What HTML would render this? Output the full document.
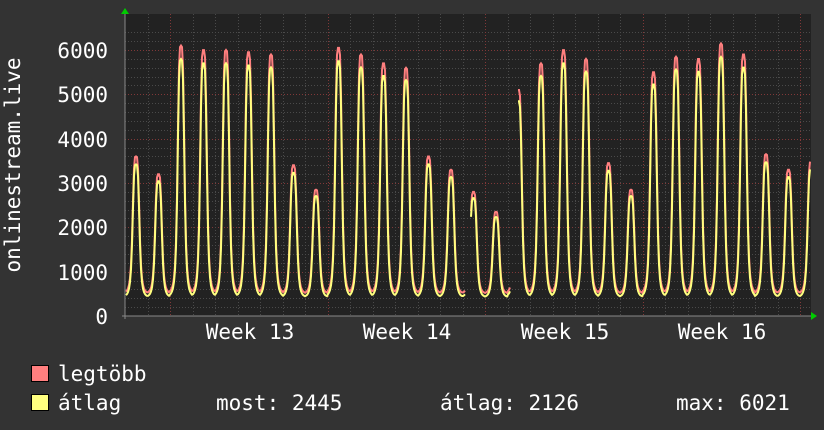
<!DOCTYPE html>
<html><head><meta charset="utf-8"><style>
html,body{margin:0;padding:0;background:#333;}
svg{display:block}
text{font-family:"DejaVu Sans Mono","Liberation Mono",monospace;font-size:21px;fill:#fff}
</style></head><body>
<svg id="g" width="824" height="430" xmlns="http://www.w3.org/2000/svg">
<rect x="0" y="0" width="824" height="430" fill="#333"/>
<rect x="125" y="14" width="686" height="302" fill="#222"/>
<g id="grid"></g>
<g id="data"></g>
<line x1="122" y1="316" x2="813" y2="316" stroke="#888" stroke-width="1"/>
<line x1="125" y1="10" x2="125" y2="319" stroke="#888" stroke-width="1"/>
<polygon points="121,14 129,14 125,8" fill="#0c0"/>
<polygon points="811,312 811,320 817,316" fill="#0c0"/>
<g text-anchor="end">
<text x="108" y="58">6000</text>
<text x="108" y="102">5000</text>
<text x="108" y="147">4000</text>
<text x="108" y="191">3000</text>
<text x="108" y="235">2000</text>
<text x="108" y="280">1000</text>
<text x="108" y="324">0</text>
</g>
<g text-anchor="middle">
<text x="250" y="339">Week 13</text>
<text x="407" y="339">Week 14</text>
<text x="565" y="339">Week 15</text>
<text x="722" y="339">Week 16</text>
</g>
<text transform="translate(20,165) rotate(-90)" text-anchor="middle">onlinestream.live</text>
<rect x="31.5" y="365.5" width="17" height="16" fill="#ff7f7f" stroke="#000"/>
<rect x="31.5" y="394.5" width="17" height="16" fill="#ffff7f" stroke="#000"/>
<text x="58" y="381">legtöbb</text>
<text x="58" y="410">átlag</text>
<text x="216" y="410">most: 2445</text>
<text x="440" y="410">átlag: 2126</text>
<text x="676" y="410">max: 6021</text>
</svg>
<script>
var ns="http://www.w3.org/2000/svg";
var grid=document.getElementById('grid'),data=document.getElementById('data');
function ln(x1,y1,x2,y2,c,d){var l=document.createElementNS(ns,'line');l.setAttribute('x1',x1);l.setAttribute('y1',y1);l.setAttribute('x2',x2);l.setAttribute('y2',y2);l.setAttribute('stroke',c);l.setAttribute('stroke-width',1);l.setAttribute('stroke-dasharray',d);grid.appendChild(l);}
function Y(v){return 316-v*0.04433;}
for(var v=200;v<=6400;v+=200){var y=Math.round(Y(v))+0.5;if(y<14)break;ln(125,y,811,y,v%1000==0?'#803838':'#4a4a4a','1,2');}
for(var i=1;i<31;i++){var x=Math.round(125+i*22.5)+0.5;ln(x,14,x,316,(i-2)%7==0?'#803838':'#4a4a4a','1,2');}
var peaks=[3600,3200,6100,6000,6000,5950,5900,3400,2850,6050,5900,5700,5600,3600,3300,2800,2350,5100,5700,6000,5800,3450,2850,5500,5850,5800,6150,5900,3650,3300,3500];
function val(x,f){var t=(x-136)/22.5;var d=Math.round(t);var a=Math.abs(t-d);if(d<0)d=0;if(d>=peaks.length)d=peaks.length-1;
var p=peaks[d]*f;var base=f>0.97?500:420;
var s=1/(1+Math.pow(a/0.16,4));
var b=base+60*Math.pow(Math.cos(a*Math.PI*2)*0.5+0.5,2)*0;
return b+(p-b)*s;}
function draw(f,c){var pts=[];for(var x=126;x<=810;x+=1){if((x>=466&&x<=470)||(x>=511&&x<=517)){if(pts.length)mk(pts,c);pts=[];continue;}pts.push(x+','+Y(val(x,f)).toFixed(1));}mk(pts,c);}
function mk(pts,c){var p=document.createElementNS(ns,'polyline');p.setAttribute('points',pts.join(' '));p.setAttribute('fill','none');p.setAttribute('stroke',c);p.setAttribute('stroke-width',2);data.appendChild(p);}
draw(1,'#ff7f7f');draw(0.95,'#ffff7f');
</script>
</body></html>
